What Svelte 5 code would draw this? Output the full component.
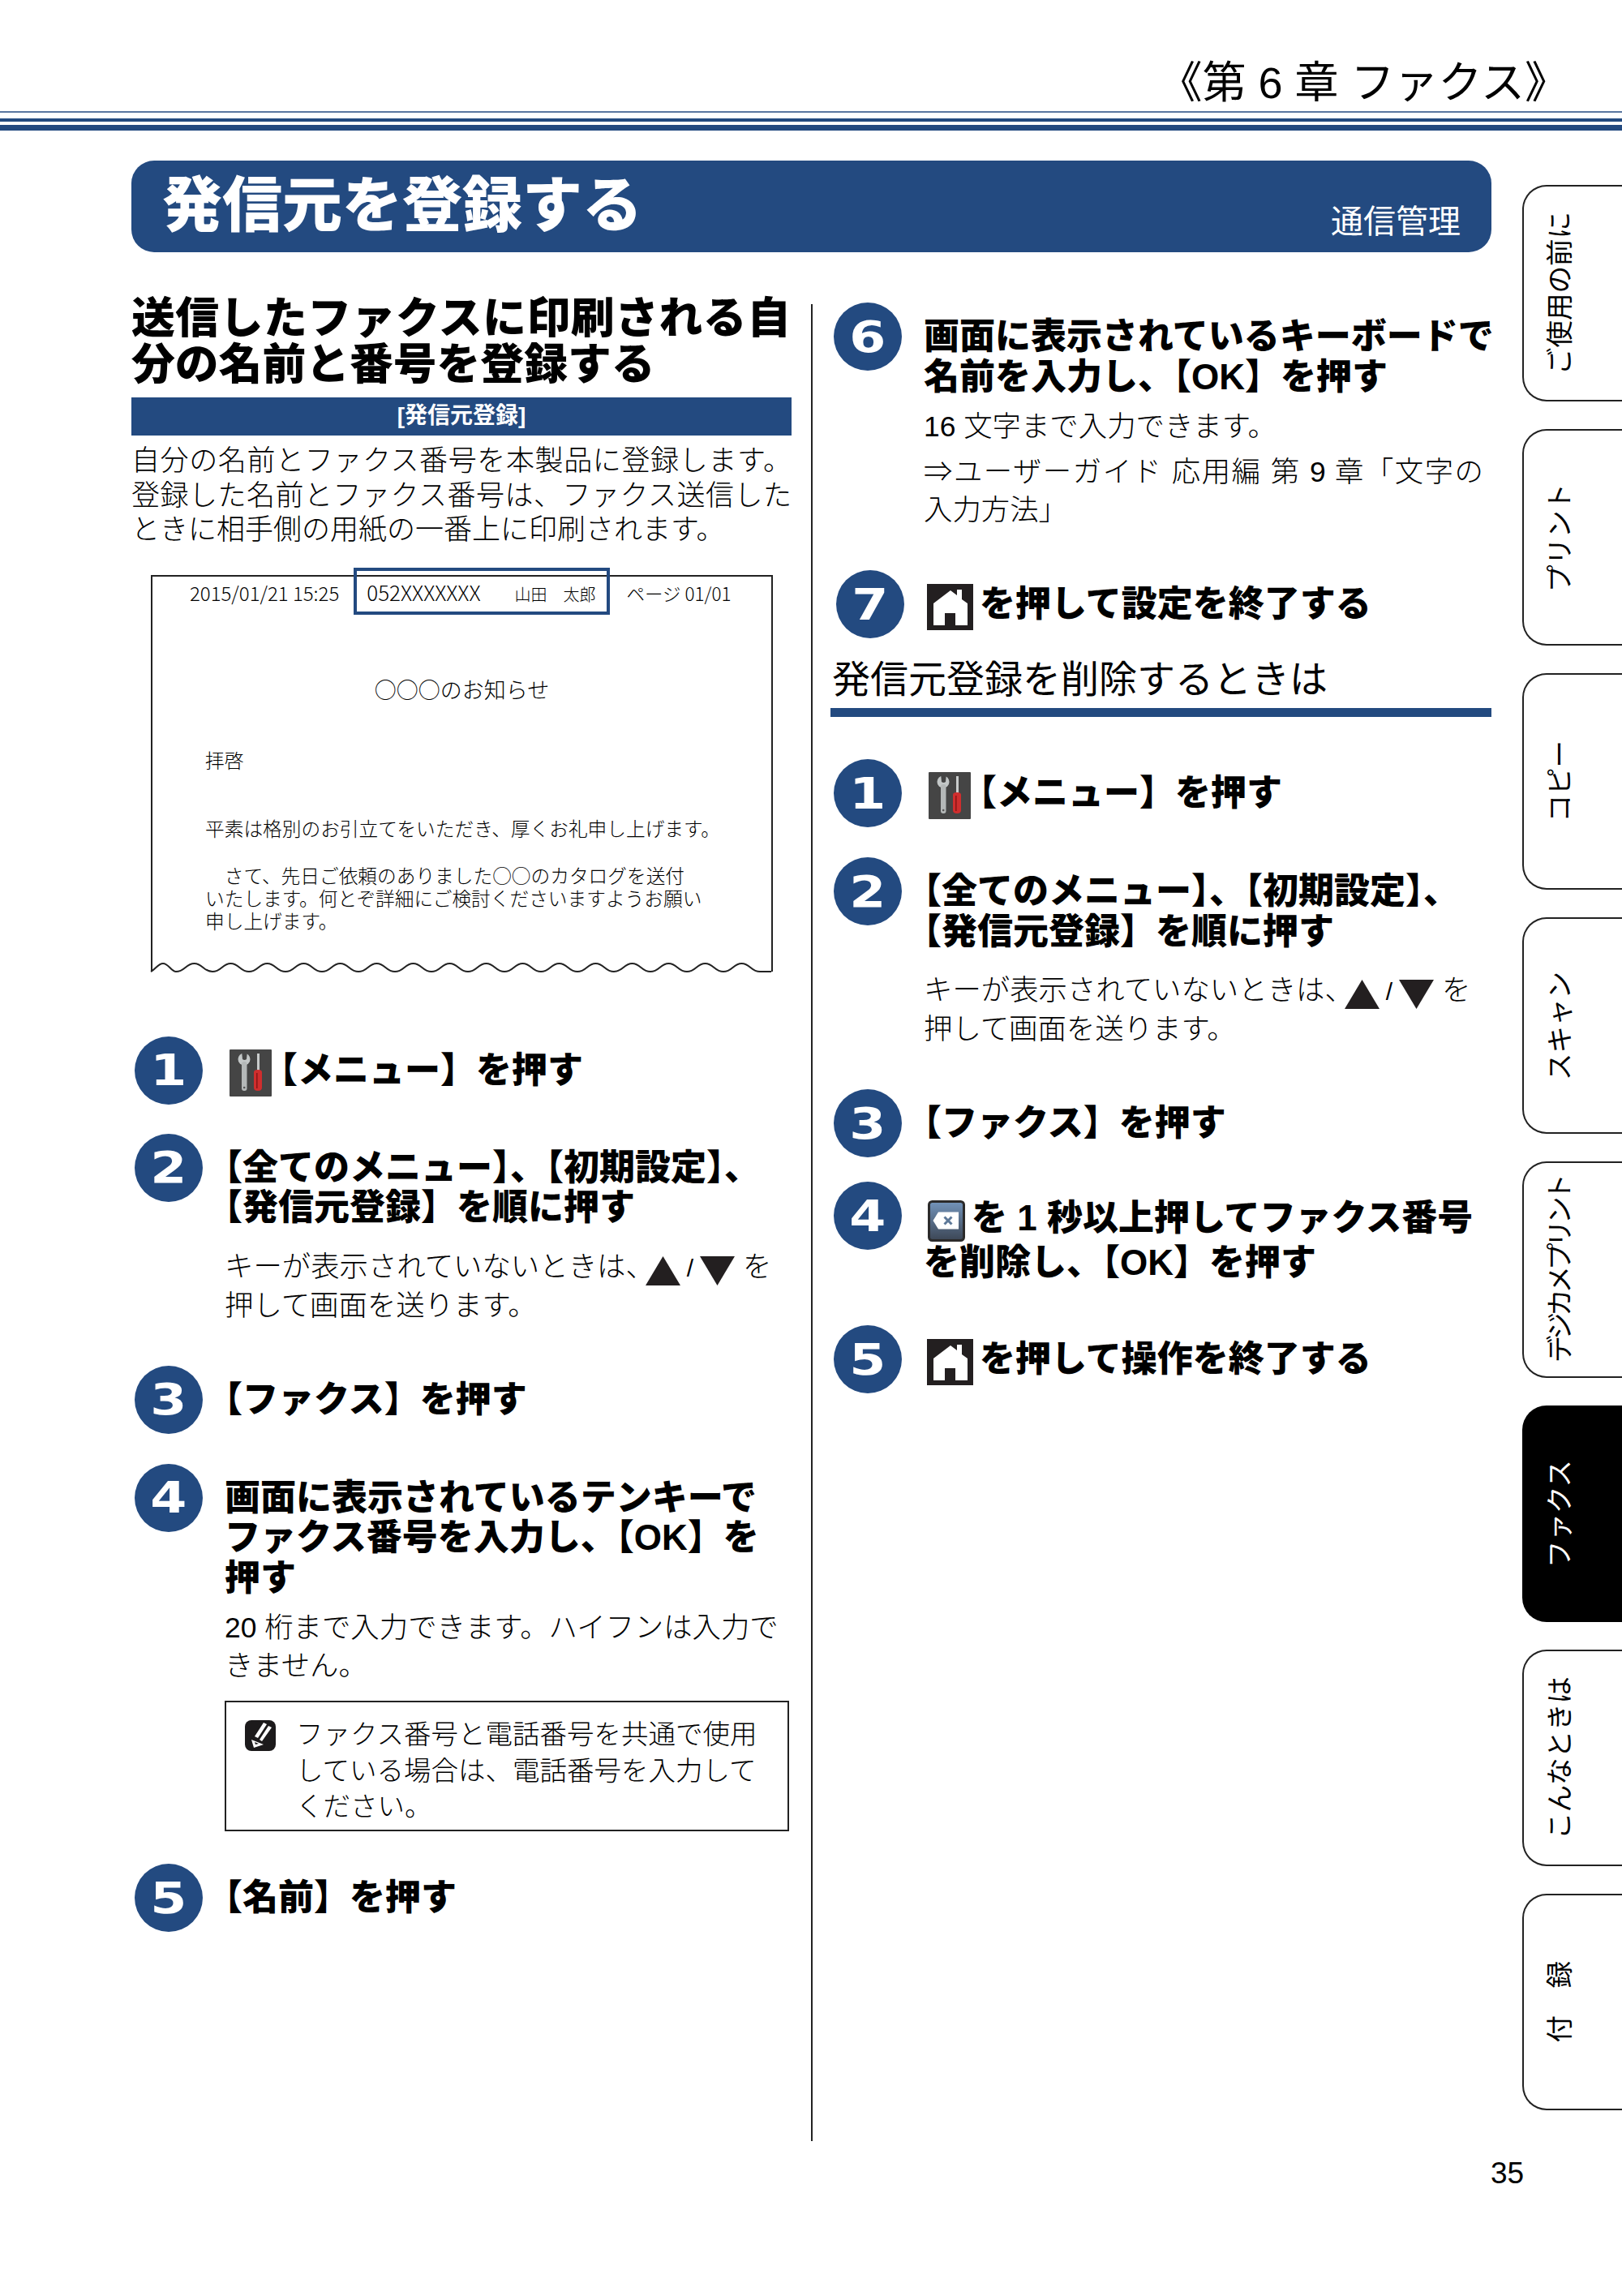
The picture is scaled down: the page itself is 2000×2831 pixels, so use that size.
<script lang="ts">
	const tabs = ['ご使用の前に', 'プリント', 'コピー', 'スキャン', 'デジカメプリント', 'ファクス', 'こんなときは', '付　録'];
	const active = 'ファクス';

	// bottom edge of the sample sheet: a row of soft scallops
	const wave = (() => {
		let d = 'M0 11 C6 8 9 1 15 1 C22 1 25 11 31 11';
		for (let x = 31; x + 45 <= 765; x += 45) d += ' c11 0 12 -10 22.5 -10 s11.5 10 22.5 10';
		return d + ' L765 11';
	})();
</script>

{#snippet num(n: number)}
	<span class="num"><b>{n}</b></span>
{/snippet}

{#snippet menuIcon()}
	<svg class="ico menu" viewBox="0 0 52 58" width="52" height="58" aria-hidden="true">
		<rect width="52" height="58" rx="1" fill="#454545" />
		<circle cx="18" cy="12" r="7.5" fill="#c3c7c7" />
		<path d="M15 2 L22 2 L21 12 Q18.5 14 16 12 Z" fill="#454545" />
		<rect x="15" y="15" width="6.5" height="36" rx="3" fill="#b4b8b8" />
		<circle cx="18.2" cy="47" r="1.3" fill="#555" />
		<rect x="34" y="5" width="3" height="21" fill="#c9cccc" />
		<path d="M30 28 Q30 25 35 25 Q40 25 40 28 L40 47 Q40 51 35 51 Q30 51 30 47 Z" fill="#cf2e2e" />
		<rect x="33" y="29" width="1.6" height="19" fill="#8e1616" />
	</svg>
{/snippet}

{#snippet homeIcon()}
	<svg class="ico home" viewBox="0 0 57 57" width="57" height="57" aria-hidden="true">
		<rect width="57" height="57" fill="#231f20" />
		<path
			fill="#fff"
			d="M29 8 L37 14 L37 7 L43 7 L43 19 L50 24 L50 51 L35 51 L35 36 L22 36 L22 51 L8 51 L8 24 Z"
		/>
	</svg>
{/snippet}

{#snippet backIcon()}
	<svg class="ico back" viewBox="0 0 46 51" width="46" height="51" aria-hidden="true">
		<defs>
			<linearGradient id="keyfill" x1="0" y1="0" x2="0" y2="1">
				<stop offset="0" stop-color="#7394bb" />
				<stop offset="1" stop-color="#3c4655" />
			</linearGradient>
		</defs>
		<rect x="1.5" y="1.5" width="43" height="48" rx="4" fill="url(#keyfill)" stroke="#2b2a2a" stroke-width="3" />
		<path d="M6.5 25 L13 14.5 L38 14.5 L38 35.5 L13 35.5 Z" fill="#fff" />
		<path d="M20.5 20.5 L29.5 29.5 M29.5 20.5 L20.5 29.5" stroke="#5d7898" stroke-width="3" />
	</svg>
{/snippet}

{#snippet keysHint()}
	<p class="sub hint">
		キーが表示されていないときは、<svg class="tri up" viewBox="0 0 43 36" width="43" height="36" aria-hidden="true"
			><path d="M21.5 0 L43 36 L0 36 Z" /></svg
		><span class="slash">/</span><svg class="tri" viewBox="0 0 43 36" width="43" height="36" aria-hidden="true"
			><path d="M0 0 L43 0 L21.5 36 Z" /></svg
		> を<br />押して画面を送ります。
	</p>
{/snippet}

<div class="page">
	<header class="chapter">《第 6 章 ファクス》</header>
	<div class="rules"><i></i><i></i><i></i></div>

	<div class="content">
		<main>
			<div class="banner">
				<h1>発信元を登録する</h1>
				<span>通信管理</span>
			</div>

			<div class="columns">
				<section class="col left">
					<h2><span>送信したファクスに印刷される自</span>分の名前と番号を登録する</h2>
					<div class="bar">[発信元登録]</div>
					<p class="lead">
						<span>自分の名前とファクス番号を本製品に登録します。</span>
						<span>登録した名前とファクス番号は、ファクス送信した</span>
						ときに相手側の用紙の一番上に印刷されます。
					</p>

					<div class="fax">
						<div class="fax-top">
							<span class="f-date">2015/01/21 15:25</span>
							<span class="f-no">052XXXXXXX</span>
							<span class="f-name">山田　太郎</span>
							<span class="f-page">ページ 01/01</span>
						</div>
						<div class="f-mark"></div>
						<div class="f-title">○○○のお知らせ</div>
						<div class="f-body">
							<p class="f-a">拝啓</p>
							<p class="f-b">平素は格別のお引立てをいただき、厚くお礼申し上げます。</p>
							<p class="f-c">
								　さて、先日ご依頼のありました○○のカタログを送付<br />いたします。何とぞ詳細にご検討くださいますようお願い<br />申し上げます。
							</p>
						</div>
						<svg class="f-wave" viewBox="0 0 765 12" width="765" height="12" aria-hidden="true">
							<path d={wave} />
						</svg>
					</div>

					<div class="step g80">
						{@render num(1)}
						<div class="txt">
							<h3>{@render menuIcon()}<span class="after-ico">【メニュー】を押す</span></h3>
						</div>
					</div>

					<div class="step g36">
						{@render num(2)}
						<div class="txt">
							<h3>【全てのメニュー】、【初期設定】、<br />【発信元登録】を順に押す</h3>
							{@render keysHint()}
						</div>
					</div>

					<div class="step g50">
						{@render num(3)}
						<div class="txt"><h3>【ファクス】を押す</h3></div>
					</div>

					<div class="step g37">
						{@render num(4)}
						<div class="txt">
							<h3>画面に表示されているテンキーで<br />ファクス番号を入力し、【OK】を<br />押す</h3>
							<p class="sub near">20 桁まで入力できます。ハイフンは入力で<br />きません。</p>
							<div class="note">
								<svg class="pencil" viewBox="0 0 38 38" width="38" height="38" aria-hidden="true">
									<rect width="38" height="38" rx="8" fill="#1c1a1b" />
									<path
										fill="#fff"
										d="M12 20 L23 3 L27 5 L16 22 Z M18 24 L29 7 L33 9 L21 26 Z M8 24 L11 34 L23 30 Z"
									/>
									<path fill="#1c1a1b" d="M12 27 L13 30 L17 29 Z" />
								</svg>
								<p>ファクス番号と電話番号を共通で使用<br />している場合は、電話番号を入力して<br />ください。</p>
							</div>
						</div>
					</div>

					<div class="step g40">
						{@render num(5)}
						<div class="txt"><h3>【名前】を押す</h3></div>
					</div>
				</section>

				<section class="col right">
					<div class="step top">
						{@render num(6)}
						<div class="txt">
							<h3>画面に表示されているキーボードで<br />名前を入力し、【OK】を押す</h3>
							<p class="sub near">16 文字まで入力できます。</p>
							<p class="sub ref"><span>⇒ユーザーガイド 応用編 第 9 章「文字の</span>入力方法」</p>
						</div>
					</div>

					<div class="step g50 seven">
						{@render num(7)}
						<div class="txt">
							<h3>{@render homeIcon()}<span class="after-ico home">を押して設定を終了する</span></h3>
						</div>
					</div>

					<h4>発信元登録を削除するときは</h4>

					<div class="step g52">
						{@render num(1)}
						<div class="txt">
							<h3>{@render menuIcon()}<span class="after-ico">【メニュー】を押す</span></h3>
						</div>
					</div>

					<div class="step g37">
						{@render num(2)}
						<div class="txt">
							<h3>【全てのメニュー】、【初期設定】、<br />【発信元登録】を順に押す</h3>
							{@render keysHint()}
						</div>
					</div>

					<div class="step g50">
						{@render num(3)}
						<div class="txt"><h3>【ファクス】を押す</h3></div>
					</div>

					<div class="step g30">
						{@render num(4)}
						<div class="txt">
							<h3 class="tall">{@render backIcon()}<span class="after-ico back">を 1 秒以上押してファクス番号</span><br />を削除し、【OK】を押す</h3>
						</div>
					</div>

					<div class="step g50">
						{@render num(5)}
						<div class="txt">
							<h3>{@render homeIcon()}<span class="after-ico home">を押して操作を終了する</span></h3>
						</div>
					</div>
				</section>
			</div>
		</main>

		<nav class="tabs">
			{#each tabs as tab}
				<div class="tab" class:on={tab === active} class:tight={tab.length > 6}>
					<span>{tab}</span>
				</div>
			{/each}
		</nav>
	</div>

	<div class="folio">35</div>
</div>

<style>
	:global(body) {
		margin: 0;
		background: #fff;
	}
	.page {
		--navy: #234a80;
		position: relative;
		width: 2000px;
		height: 2831px;
		overflow: hidden;
		background: #fff;
		color: #000;
		font-family: 'Liberation Sans', 'Noto Sans CJK JP', sans-serif;
		font-weight: 300;
	}
	h1,
	h2,
	h3,
	h4,
	p {
		margin: 0;
	}

	.chapter {
		height: 137px;
		box-sizing: border-box;
		padding: 65px 66px 0 0;
		text-align: right;
		font-size: 54px;
		line-height: 74px;
		font-weight: 400;
	}
	.rules {
		display: flex;
		flex-direction: column;
	}
	.rules i {
		display: block;
		background: var(--navy);
	}
	.rules i:nth-child(1) {
		height: 2px;
		opacity: 0.75;
	}
	.rules i:nth-child(2) {
		height: 4px;
		margin-top: 7px;
	}
	.rules i:nth-child(3) {
		height: 7px;
		margin-top: 4px;
	}

	.content {
		display: flex;
		padding: 37px 0 0 162px;
	}
	main {
		width: 1677px;
		flex: none;
	}

	.banner {
		height: 113px;
		box-sizing: border-box;
		display: flex;
		justify-content: space-between;
		background: var(--navy);
		border-radius: 28px;
		color: #fff;
		padding: 0 38px 0 38px;
	}
	.banner h1 {
		font-size: 74px;
		line-height: 112px;
		font-weight: 900;
	}
	.banner span {
		font-size: 40px;
		line-height: 40px;
		margin-top: 55px;
		font-weight: 400;
	}

	.columns {
		display: flex;
		margin-top: 53px;
	}
	.col.left {
		width: 814px;
		flex: none;
		margin-right: 24px;
	}
	.col.right {
		width: 815px;
		flex: none;
		margin-top: 11px;
		height: 2265px;
		border-left: 2px solid #222;
		padding-left: 22px;
		margin-right: -80px;
	}

	h2 {
		font-size: 53.8px;
		line-height: 57px;
		font-weight: 900;
		white-space: nowrap;
	}
	h2 span {
		display: block;
		width: 813px;
		white-space: normal;
		text-align: justify;
		text-align-last: justify;
	}
	.bar {
		margin-top: 12px;
		height: 47px;
		background: var(--navy);
		color: #fff;
		text-align: center;
		font-size: 28px;
		line-height: 45px;
		font-weight: 700;
	}
	.lead {
		margin-top: 10px;
		font-size: 35px;
		line-height: 42.5px;
		white-space: nowrap;
	}
	.lead span {
		display: block;
		white-space: normal;
		text-align: justify;
		text-align-last: justify;
	}

	.fax {
		position: relative;
		box-sizing: border-box;
		width: 767px;
		height: 489px;
		margin: 34px 0 0 24px;
		border: solid #222;
		border-width: 2px 2px 0;
		font-size: 23.7px;
		white-space: nowrap;
	}
	.fax-top {
		display: flex;
		align-items: baseline;
		padding: 6px 0 0 46px;
		font-family: 'Noto Sans CJK JP', sans-serif;
		font-size: 22.5px;
		line-height: 26px;
	}
	.f-date {
		font-size: 24px;
	}
	.f-no {
		margin-left: 34px;
		font-size: 26px;
	}
	.f-name {
		margin-left: 42px;
		font-size: 20px;
	}
	.f-page {
		margin-left: 38px;
	}
	.f-mark {
		position: absolute;
		left: 248px;
		top: -11px;
		width: 316px;
		height: 58px;
		box-sizing: border-box;
		border: 4px solid var(--navy);
	}
	.f-title {
		margin-top: 89px;
		text-align: center;
		font-family: 'Noto Sans CJK JP', sans-serif;
		font-size: 27px;
		line-height: 30px;
	}
	.f-body {
		padding-left: 65px;
		line-height: 28px;
	}
	.f-a {
		margin-top: 60px;
	}
	.f-b {
		margin-top: 56px;
	}
	.f-c {
		margin-top: 28px;
		font-family: 'Noto Sans CJK JP', sans-serif;
	}
	.f-wave {
		position: absolute;
		left: -2px;
		bottom: -1px;
		display: block;
		overflow: visible;
	}
	.f-wave path {
		fill: none;
		stroke: #222;
		stroke-width: 2;
	}

	.step {
		display: flex;
		margin-left: 4px;
	}
	.step.top {
		margin-top: -2px;
	}
	.step.seven {
		margin-left: 7px;
	}
	.step.seven .txt {
		margin-left: 24px;
	}
	.g30 {
		margin-top: 30px;
	}
	.g36 {
		margin-top: 36px;
	}
	.g37 {
		margin-top: 37px;
	}
	.g40 {
		margin-top: 40px;
	}
	.g50 {
		margin-top: 50px;
	}
	.g52 {
		margin-top: 52px;
	}
	.g80 {
		margin-top: 80px;
	}
	.num {
		flex: none;
		width: 84px;
		height: 84px;
		border-radius: 50%;
		background: var(--navy);
		color: #fff;
		display: flex;
		align-items: center;
		justify-content: center;
		font-family: 'DejaVu Sans', sans-serif;
		font-size: 54px;
	}
	.num b {
		font-weight: 700;
		display: block;
		transform: scaleX(1.2);
	}
	.txt {
		margin-left: 27px;
		padding-top: 17px;
		min-width: 0;
		flex: 1;
	}
	h3 {
		font-size: 44px;
		line-height: 49.5px;
		font-weight: 900;
		white-space: nowrap;
		text-spacing-trim: trim-start;
	}
	h3.tall {
		line-height: 55px;
	}
	.ico {
		vertical-align: middle;
		margin: -8px 0;
	}
	.ico.menu {
		margin-left: 6px;
	}
	.ico.home {
		margin-left: 4px;
	}
	.ico.back {
		margin-left: 5px;
	}
	.after-ico {
		display: inline-block;
		margin-left: 10px;
	}
	.after-ico.home {
		margin-left: 8px;
	}
	.after-ico.back {
		margin-left: 8px;
	}

	.sub {
		font-size: 35.4px;
		line-height: 47px;
		white-space: nowrap;
	}
	.sub.hint {
		margin-top: 25px;
	}
	.sub.near {
		margin-top: 14px;
	}
	.sub.ref {
		margin-top: 9px;
	}
	.sub.ref span {
		display: block;
		width: 690px;
		white-space: normal;
		text-align: justify;
		text-align-last: justify;
	}
	.tri {
		vertical-align: 5px;
		margin: -16px 0;
	}
	.tri.up {
		margin-left: -11px;
	}
	.tri path {
		fill: #231f20;
	}
	.slash {
		margin: 0 8px;
		font-size: 30px;
	}

	.note {
		display: flex;
		box-sizing: border-box;
		width: 696px;
		height: 161px;
		margin-top: 19px;
		border: 2px solid #222;
		padding: 18px 0 0 23px;
		font-size: 33.5px;
		line-height: 44.5px;
		white-space: nowrap;
	}
	.pencil {
		flex: none;
		margin: 4px 25px 0 0;
	}

	h4 {
		margin-top: 21px;
		padding-bottom: 5px;
		border-bottom: 11px solid var(--navy);
		font-size: 47px;
		line-height: 60px;
		font-weight: 400;
		padding-left: 2px;
	}

	.tabs {
		position: absolute;
		left: 1877px;
		top: 228px;
		display: flex;
		flex-direction: column;
		gap: 34px;
	}
	.tab {
		box-sizing: border-box;
		width: 124px;
		height: 267px;
		display: flex;
		align-items: center;
		padding-left: 27px;
		border: 2px solid #222;
		border-right: 0;
		border-radius: 30px 0 0 30px;
	}
	.tab span {
		writing-mode: vertical-rl;
		text-orientation: sideways;
		transform: rotate(180deg);
		font-size: 33.5px;
		line-height: 36px;
		white-space: nowrap;
		font-weight: 400;
	}
	.tab.tight span {
		letter-spacing: -5px;
	}
	.tab.on {
		background: #000;
		border-color: #000;
		color: #fff;
	}

	.folio {
		position: absolute;
		left: 1838px;
		top: 2658px;
		font-size: 37px;
		line-height: 44px;
		font-weight: 400;
	}
</style>
